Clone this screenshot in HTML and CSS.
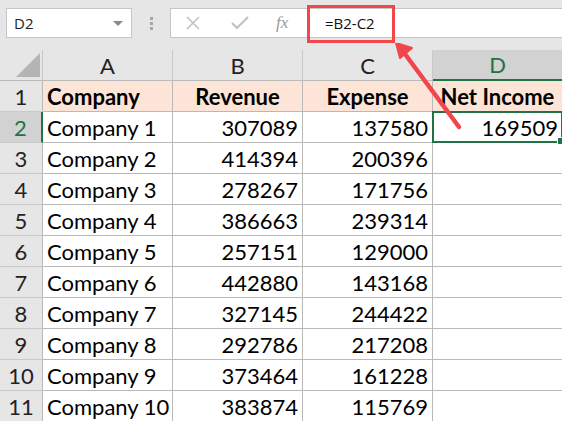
FILE: index.html
```html
<!DOCTYPE html>
<html lang="en">
<head>
  <meta charset="UTF-8">
  <title>Net Income</title>
  <link rel="stylesheet" href="styles.css">
</head>
<body>
  <div class="toolbar">
    <div class="name-box">
      <span>D2</span>
      <svg class="caret" width="10" height="6" viewBox="0 0 10 6"><path d="M0 0h10L5 5z" fill="#8a8a8a"/></svg>
    </div>
    <div class="grip"><i></i><i></i><i></i></div>
    <div class="formula-bar">
      <div class="fb-icons">
        <svg width="14" height="14" viewBox="0 0 14 14"><path d="M1 1L13 13M13 1L1 13" stroke="#c2c2c2" stroke-width="1.6" fill="none"/></svg>
        <svg width="18" height="14" viewBox="0 0 18 14"><path d="M1 7l5 5L17 1" stroke="#c2c2c2" stroke-width="2.2" fill="none"/></svg>
        <span class="fx">fx</span>
      </div>
      <div class="formula">=B2-C2</div>
    </div>
  </div>

  <div class="sheet">
    <div class="cell corner"><svg width="24" height="24" viewBox="0 0 24 24"><path d="M24 0V24H0z" fill="#b4b4b4"/></svg></div>
    <div class="cell colhead">A</div>
    <div class="cell colhead">B</div>
    <div class="cell colhead">C</div>
    <div class="cell colhead active">D</div>

    <div class="cell rowhead">1</div>
    <div class="cell title">Company</div>
    <div class="cell title mid">Revenue</div>
    <div class="cell title mid">Expense</div>
    <div class="cell title mid">Net Income</div>

    <div class="cell rowhead active">2</div>
    <div class="cell">Company 1</div>
    <div class="cell num">307089</div>
    <div class="cell num">137580</div>
    <div class="cell num selected">169509<b class="handle"></b></div>

    <div class="cell rowhead">3</div>
    <div class="cell">Company 2</div>
    <div class="cell num">414394</div>
    <div class="cell num">200396</div>
    <div class="cell"></div>

    <div class="cell rowhead">4</div>
    <div class="cell">Company 3</div>
    <div class="cell num">278267</div>
    <div class="cell num">171756</div>
    <div class="cell"></div>

    <div class="cell rowhead">5</div>
    <div class="cell">Company 4</div>
    <div class="cell num">386663</div>
    <div class="cell num">239314</div>
    <div class="cell"></div>

    <div class="cell rowhead">6</div>
    <div class="cell">Company 5</div>
    <div class="cell num">257151</div>
    <div class="cell num">129000</div>
    <div class="cell"></div>

    <div class="cell rowhead">7</div>
    <div class="cell">Company 6</div>
    <div class="cell num">442880</div>
    <div class="cell num">143168</div>
    <div class="cell"></div>

    <div class="cell rowhead">8</div>
    <div class="cell">Company 7</div>
    <div class="cell num">327145</div>
    <div class="cell num">244422</div>
    <div class="cell"></div>

    <div class="cell rowhead">9</div>
    <div class="cell">Company 8</div>
    <div class="cell num">292786</div>
    <div class="cell num">217208</div>
    <div class="cell"></div>

    <div class="cell rowhead">10</div>
    <div class="cell">Company 9</div>
    <div class="cell num">373464</div>
    <div class="cell num">161228</div>
    <div class="cell"></div>

    <div class="cell rowhead">11</div>
    <div class="cell">Company 10</div>
    <div class="cell num">383874</div>
    <div class="cell num">115769</div>
    <div class="cell"></div>
  </div>

  <!-- callout pointing from the formula to the cell -->
  <div class="callout">
    <div class="highlight"></div>
    <svg class="arrow" width="80" height="100" viewBox="0 0 80 100">
      <path d="M64 84L10 11" stroke="#f0464c" stroke-width="4.5" stroke-linecap="round" fill="none"/>
      <path d="M1 0L17 5L5 15z" fill="#f0464c" stroke="#f0464c" stroke-width="2" stroke-linejoin="round"/>
    </svg>
  </div>
</body>
</html>
```

FILE: styles.css
```css
body {
  margin: 0;
  width: 562px;
  height: 421px;
  overflow: hidden;
  position: relative;
  background: #ffffff;
  font-family: 'Lato', 'Liberation Sans', sans-serif;
  color: #000;
}

.toolbar {
  height: 50px;
  background: #e6e6e6;
  display: flex;
  align-items: flex-start;
  padding-top: 8px;
  box-sizing: border-box;
}

.name-box {
  margin-left: 6px;
  width: 126px;
  height: 30px;
  box-sizing: border-box;
  background: #fff;
  border: 1px solid #c6c6c6;
  display: flex;
  align-items: center;
  justify-content: space-between;
  padding: 0 8px 0 7px;
  font-family: 'Open Sans', 'Liberation Sans', sans-serif;
  font-size: 15px;
  color: #222;
}

.caret {
  margin-top: 2px;
}

.grip {
  width: 38px;
  height: 30px;
  display: flex;
  flex-direction: column;
  align-items: center;
  justify-content: center;
  gap: 2px;
}

.grip i {
  width: 3px;
  height: 3px;
  background: #a6a6a6;
}

.formula-bar {
  flex: 1;
  height: 30px;
  box-sizing: border-box;
  background: #fff;
  border: 1px solid #c6c6c6;
  border-right: none;
  display: flex;
  align-items: center;
}

.fb-icons {
  width: 126px;
  display: flex;
  align-items: center;
  padding-left: 15px;
  box-sizing: border-box;
}

.fb-icons svg:first-child {
  margin-right: 31px;
}

.fb-icons svg:nth-child(2) {
  margin-right: 27px;
}

.fx {
  font-family: 'Liberation Serif', serif;
  font-style: italic;
  font-size: 17px;
  color: #9a9a9a;
}

.formula {
  padding-left: 28px;
  font-family: 'Open Sans', 'Liberation Sans', sans-serif;
  font-size: 15px;
  color: #111;
}

.sheet {
  display: grid;
  grid-template-columns: 43px 130px 130px 130px 130px;
  grid-auto-rows: 31px;
  font-size: 22px;
}

.cell {
  box-sizing: border-box;
  border-right: 1px solid #b9b9b9;
  border-bottom: 1px solid #b9b9b9;
  padding: 0 4px;
  display: flex;
  align-items: center;
  white-space: nowrap;
  position: relative;
}

.num {
  justify-content: flex-end;
}

.mid {
  justify-content: center;
}

.corner {
  background: #e6e6e6;
  border-right-color: #c9c9c9;
  justify-content: flex-end;
  align-items: flex-end;
  padding: 0 2px 3px 0;
}

.colhead {
  background: #e6e6e6;
  border-right-color: #c9c9c9;
  justify-content: center;
  color: #222;
}

.colhead.active {
  background: #d2d2d2;
  color: #217346;
  border-bottom: 2px solid #217346;
}

.rowhead {
  background: #e6e6e6;
  justify-content: center;
  border-bottom-color: #c9c9c9;
  padding: 0;
  color: #222;
}

.rowhead.active {
  background: #d2d2d2;
  color: #217346;
  border-right: 2px solid #217346;
}

.title {
  background: #fce4d6;
  font-weight: bold;
}

.selected {
  border: 2px solid #217346;
  margin: -1px 0 0 -1px;
  padding-right: 3px;
}

.handle {
  position: absolute;
  right: -4px;
  bottom: -4px;
  width: 6px;
  height: 6px;
  background: #217346;
  border: 1px solid #fff;
}

.callout {
  position: absolute;
  left: 0;
  top: 0;
}

.highlight {
  position: absolute;
  left: 307px;
  top: 5px;
  width: 88px;
  height: 38px;
  box-sizing: border-box;
  border: 3px solid #f0464c;
}

.arrow {
  position: absolute;
  left: 395px;
  top: 43px;
}
```
